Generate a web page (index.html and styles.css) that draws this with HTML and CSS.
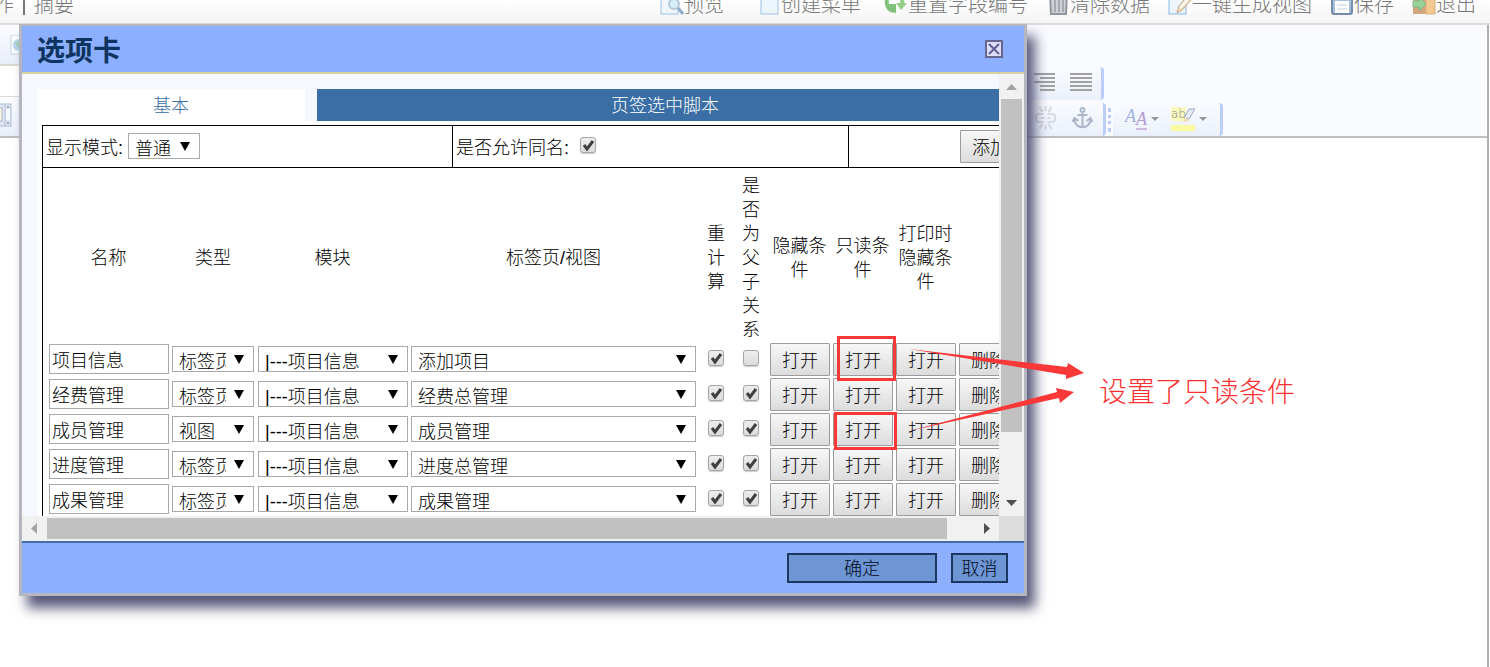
FILE: index.html
```html
<!DOCTYPE html>
<html lang="zh-CN">
<head>
    <meta charset="UTF-8">
    <meta name="viewport" content="width=device-width, initial-scale=1.0">
    <title>选项卡</title>
    <link rel="stylesheet" href="styles.css">
</head>
<body>
    <header class="topbar">
        <nav class="crumbs">
            <a href="#">操作</a>
            <span class="divider"></span>
            <a href="#">摘要</a>
        </nav>
        <div class="actions">
            <button class="action preview"><svg viewBox="0 0 24 24"><rect x="1" y="1" width="17" height="22" fill="#e8f3fd" stroke="#5f9ed8"/><circle cx="14" cy="13" r="5" fill="#bfe4f8" stroke="#8aa6c4" stroke-width="2"/><path d="M18 17l5 6" stroke="#4d78a8" stroke-width="3"/></svg>预览</button>
            <button class="action create"><svg viewBox="0 0 24 24"><rect x="4" y="1" width="17" height="22" fill="#e3f1fd" stroke="#5f9ed8"/></svg>创建菜单</button>
            <button class="action"><svg viewBox="0 0 24 24"><path d="M10 20c-6-1-8-6-7-12" fill="none" stroke="#2f9a26" stroke-width="4"/><path d="M4 13h8v10z" fill="#2f9a26"/><path d="M12 5c5 0 7 4 6 8" fill="none" stroke="#4fb33f" stroke-width="4"/><path d="M12 12h11l-6 7z" fill="#4fb33f"/></svg>重置字段编号</button>
            <button class="action"><svg viewBox="0 0 24 24"><path d="M4 2h17l-1 21H5z" fill="#b3bac4" stroke="#4c545f" stroke-width="2"/><path d="M9 4v17M13 4v17M17 4v17" stroke="#6b737e" stroke-width="2"/></svg>清除数据</button>
            <button class="action"><svg viewBox="0 0 24 24"><rect x="1" y="1" width="17" height="22" fill="#e3f1fd" stroke="#3f8de0"/><path d="M9 22l2-7L20 4l4 4-10 11z" fill="#f5c98c" stroke="#9a6b3c"/><path d="M20 8l-8 9" stroke="#fff" stroke-width="2"/><path d="M19 5l3-3 2 4-2 3z" fill="#e4432f"/></svg>一键生成视图</button>
            <button class="action"><svg viewBox="0 0 24 24"><rect x="2" y="1" width="20" height="22" rx="2" fill="#6e98c6" stroke="#1f4574" stroke-width="2"/><rect x="5" y="10" width="14" height="12" fill="#fff"/><path d="M7 14h10M7 18h10" stroke="#a8b8ca"/></svg>保存</button>
            <button class="action"><svg viewBox="0 0 24 24"><rect x="1" y="2" width="14" height="21" fill="#b8702f"/><path d="M14 3l9-2v22h-9z" fill="#f0a84a" stroke="#bd8138"/><path d="M1 10h6V6l7 7-7 7v-4H1z" fill="#55b75b" stroke="#2d8a3b"/></svg>退出</button>
        </div>
    </header>

    <main class="editor">
        <div class="editor-tools">
            <div class="tools-left">
                <div class="tools-strip"><svg class="side-icon" viewBox="0 0 20 20"><rect x="1" y="0" width="18" height="19" fill="#fff" stroke="#b9c4dc"/><circle cx="9" cy="10" r="6" fill="#9fc9ec"/><path d="M5 7l6 0 -2 7z" fill="#86c78c"/></svg></div>
                <div class="tools-blank"></div>
                <div class="tools-strip"><svg class="side-icon film" viewBox="0 0 20 24"><rect x="0" y="1" width="19" height="22" fill="#d7def0" stroke="#97a5c8"/><rect x="1" y="5" width="9" height="13" fill="#fff8dc" stroke="#9099b0"/><rect x="14" y="6" width="4" height="11" fill="#f5f8ff"/><path d="M13 1v22" stroke="#97a5c8"/><path d="M15 4h2M15 20h2M3 20h2" stroke="#75839f" stroke-width="2"/></svg></div>
            </div>
            <div class="tools-right">
                <div class="tool-row">
                    <div class="tool-group">
                        <svg class="tool" viewBox="0 0 22 20"><path d="M0 2h21M6 6h15M0 10h21M6 14h15M6 18h15" stroke="#999" stroke-width="2"/></svg>
                        <svg class="tool" viewBox="0 0 22 20"><path d="M0 2h22M0 6h22M0 10h22M0 14h22M0 18h22" stroke="#999" stroke-width="2"/></svg>
                    </div>
                </div>
                <div class="tool-row">
                    <div class="tool-group">
                        <svg class="tool tall" viewBox="0 0 22 24"><path d="M9 8H5c-5 0-5 8 0 8h4M13 8h4c5 0 5 8 0 8h-4M6 12h4M13 12h3M11 0v5M5 1l3 5M17 1l-3 5M11 19v5M5 23l3-5M17 23l-3-5" fill="none" stroke="#d2d6dd" stroke-width="2"/></svg>
                        <svg class="tool tall" viewBox="0 0 22 24"><path d="M11 7v14M6 9h10M3 13c0 11 16 11 16 0M1 16l2-4 4 3M21 16l-2-4-4 3" fill="none" stroke="#a5b0c3" stroke-width="2"/><circle cx="11" cy="4" r="2" fill="none" stroke="#a5b0c3" stroke-width="2"/></svg>
                    </div>
                    <span class="grip"></span>
                    <div class="tool-group wide">
                        <span class="letters"><b>A</b><b>A</b></span>
                        <span class="caret"></span>
                        <span class="marker"><span>ab</span><svg viewBox="0 0 12 16"><path d="M1 11L6 2h6L6 12z" fill="#e5ebf5" stroke="#9caac2"/><path d="M0 15l2-5 5 4z" fill="#f0dcae"/></svg></span>
                        <span class="caret"></span>
                    </div>
                </div>
            </div>
        </div>
        <div class="editor-page"></div>
    </main>

    <section class="dialog" role="dialog" aria-labelledby="dialog-title">
        <div class="dialog-head">
            <h1 id="dialog-title">选项卡</h1>
            <button class="close" aria-label="关闭"><svg viewBox="0 0 18 18"><rect x="1" y="1" width="16" height="16" fill="#dedcf6" stroke="#66668f" stroke-width="2"/><path d="M4 4l10 10M14 4L4 14" stroke="#5f5f96" stroke-width="2"/></svg></button>
        </div>
        <div class="dialog-body">
            <div class="viewport">
                <div class="content">
                    <div class="tabs">
                        <button class="tab active">基本</button>
                        <button class="tab script">页签选中脚本</button>
                    </div>
                    <div class="panel">
                        <div class="frame">
                            <div class="options">
                                <div class="option mode">
                                    <label for="mode">显示模式:</label>
                                    <select id="mode"><option>普通</option></select>
                                </div>
                                <div class="option same">
                                    <label for="same-name">是否允许同名:</label>
                                    <input type="checkbox" id="same-name" checked>
                                </div>
                                <div class="option add"><button class="btn">添加</button></div>
                            </div>
                            <table class="rows">
                                <colgroup>
                                    <col class="c-name"><col class="c-type"><col class="c-module"><col class="c-view"><col class="c-calc"><col class="c-parent"><col class="c-btn"><col class="c-btn"><col class="c-btn"><col class="c-btn">
                                </colgroup>
                                <thead>
                                    <tr>
                                        <th>名称</th>
                                        <th>类型</th>
                                        <th>模块</th>
                                        <th>标签页/视图</th>
                                        <th><span class="narrow">重计算</span></th>
                                        <th><span class="narrow">是否为父子关系</span></th>
                                        <th>隐藏条件</th>
                                        <th>只读条件</th>
                                        <th>打印时隐藏条件</th>
                                        <th></th>
                                    </tr>
                                </thead>
                                <tbody>
                                    <tr>
                                        <td><input type="text" aria-label="名称" value="项目信息"></td>
                                        <td><select aria-label="类型"><option>标签页</option></select></td>
                                        <td><select aria-label="模块"><option>|---项目信息</option></select></td>
                                        <td><select aria-label="标签页/视图"><option>添加项目</option></select></td>
                                        <td class="check"><input type="checkbox" aria-label="重计算" checked></td>
                                        <td class="check"><input type="checkbox" aria-label="是否为父子关系"></td>
                                        <td><button class="btn">打开</button></td>
                                        <td><button class="btn">打开</button></td>
                                        <td><button class="btn">打开</button></td>
                                        <td><button class="btn">删除</button></td>
                                    </tr>
                                    <tr>
                                        <td><input type="text" aria-label="名称" value="经费管理"></td>
                                        <td><select aria-label="类型"><option>标签页</option></select></td>
                                        <td><select aria-label="模块"><option>|---项目信息</option></select></td>
                                        <td><select aria-label="标签页/视图"><option>经费总管理</option></select></td>
                                        <td class="check"><input type="checkbox" aria-label="重计算" checked></td>
                                        <td class="check"><input type="checkbox" aria-label="是否为父子关系" checked></td>
                                        <td><button class="btn">打开</button></td>
                                        <td><button class="btn">打开</button></td>
                                        <td><button class="btn">打开</button></td>
                                        <td><button class="btn">删除</button></td>
                                    </tr>
                                    <tr>
                                        <td><input type="text" aria-label="名称" value="成员管理"></td>
                                        <td><select aria-label="类型"><option>视图</option></select></td>
                                        <td><select aria-label="模块"><option>|---项目信息</option></select></td>
                                        <td><select aria-label="标签页/视图"><option>成员管理</option></select></td>
                                        <td class="check"><input type="checkbox" aria-label="重计算" checked></td>
                                        <td class="check"><input type="checkbox" aria-label="是否为父子关系" checked></td>
                                        <td><button class="btn">打开</button></td>
                                        <td><button class="btn">打开</button></td>
                                        <td><button class="btn">打开</button></td>
                                        <td><button class="btn">删除</button></td>
                                    </tr>
                                    <tr>
                                        <td><input type="text" aria-label="名称" value="进度管理"></td>
                                        <td><select aria-label="类型"><option>标签页</option></select></td>
                                        <td><select aria-label="模块"><option>|---项目信息</option></select></td>
                                        <td><select aria-label="标签页/视图"><option>进度总管理</option></select></td>
                                        <td class="check"><input type="checkbox" aria-label="重计算" checked></td>
                                        <td class="check"><input type="checkbox" aria-label="是否为父子关系" checked></td>
                                        <td><button class="btn">打开</button></td>
                                        <td><button class="btn">打开</button></td>
                                        <td><button class="btn">打开</button></td>
                                        <td><button class="btn">删除</button></td>
                                    </tr>
                                    <tr>
                                        <td><input type="text" aria-label="名称" value="成果管理"></td>
                                        <td><select aria-label="类型"><option>标签页</option></select></td>
                                        <td><select aria-label="模块"><option>|---项目信息</option></select></td>
                                        <td><select aria-label="标签页/视图"><option>成果管理</option></select></td>
                                        <td class="check"><input type="checkbox" aria-label="重计算" checked></td>
                                        <td class="check"><input type="checkbox" aria-label="是否为父子关系" checked></td>
                                        <td><button class="btn">打开</button></td>
                                        <td><button class="btn">打开</button></td>
                                        <td><button class="btn">打开</button></td>
                                        <td><button class="btn">删除</button></td>
                                    </tr>
                                </tbody>
                            </table>
                        </div>
                    </div>
                </div>
            </div>
            <div class="scrollbar vertical">
                <svg class="arrow" viewBox="0 0 25 25"><path d="M7 16l5.500-6 5.500 6z" fill="#a3a3a3"/></svg>
                <span class="thumb"></span>
                <svg class="arrow end" viewBox="0 0 25 25"><path d="M7 9l5.500 6 5.500-6z" fill="#505050"/></svg>
            </div>
            <div class="scrollbar horizontal">
                <svg class="arrow" viewBox="0 0 25 25"><path d="M15 7l-6 5.500 6 5.500z" fill="#a3a3a3"/></svg>
                <span class="thumb"></span>
                <svg class="arrow end" viewBox="0 0 25 25"><path d="M10 7l6 5.500-6 5.500z" fill="#505050"/></svg>
            </div>
            <div class="corner"></div>
        </div>
        <div class="dialog-foot">
            <button class="ok">确定</button>
            <button class="cancel">取消</button>
        </div>
    </section>

    <!-- red notes over the dialog -->
    <svg class="notes" width="1100" height="460" viewBox="0 0 1100 460">
        <rect x="838.500" y="337.500" width="56" height="42"/>
        <rect x="835.500" y="413.500" width="60" height="35"/>
        <path class="pointer" d="M909 349L1067 367l1-4 16 10-18 6v-4zM909 431L1057 392l-1-4 18 4-14 11-1-5z"/>
    </svg>
    <p class="note-text">设置了只读条件</p>
</body>
</html>
```
FILE: styles.css
```css
* {
    box-sizing: border-box;
}
body {
    margin: 0;
    min-height: 100vh;
    display: flex;
    flex-direction: column;
    overflow: hidden;
    background-color: #fff;
    color: #000;
    font-family: "Liberation Sans", "Noto Sans CJK SC", sans-serif;
    font-size: 18px;
    font-weight: 300;
    line-height: 24px;
}
button, input, select {
    font: inherit;
    color: inherit;
    margin: 0;
    border-radius: 0;
}

/* top bar */
.topbar {
    height: 25px;
    flex: none;
    display: flex;
    justify-content: space-between;
    align-items: flex-end;
    padding: 0 14px 8px 0;
    overflow: hidden;
    background: linear-gradient(#fff, #f4f4f4);
    border-bottom: 2px solid #dcdcdc;
    font-size: 20px;
    line-height: 20px;
    color: #777;
}
.crumbs {
    display: flex;
    align-items: center;
    gap: 9px;
    margin-left: -26px;
}
.crumbs a {
    color: inherit;
    text-decoration: none;
}
.divider {
    width: 2px;
    height: 20px;
    background-color: #777;
}
.actions {
    display: flex;
    align-items: flex-end;
    gap: 18px;
}
.action {
    display: flex;
    align-items: flex-end;
    padding: 0;
    border: none;
    background: none;
    white-space: nowrap;
}
.action svg {
    width: 24px;
    height: 24px;
    opacity: 0.6;
}
.action.preview {
    margin-right: 15px;
}
.action.create {
    margin-right: 5px;
}

/* editor behind the dialog */
.editor {
    flex: 1;
    display: flex;
    flex-direction: column;
    margin-right: 1px;
    border-right: 2px solid #b0b0b0;
}
.editor-tools {
    display: flex;
    height: 113px;
    background-color: #fafbff;
    border-bottom: 2px solid #c0c0c4;
}
.tools-left {
    width: 1000px;
    flex: none;
    display: flex;
    flex-direction: column;
}
.tools-strip {
    flex: 1;
    background: linear-gradient(#fbfcff, #e9eefa);
}
.tools-blank {
    height: 33px;
    background-color: #fff;
    border-top: 2px solid #dcdad2;
    border-bottom: 1px solid #dcdad2;
}
.side-icon {
    width: 20px;
    height: 20px;
    margin: 10px 0 0 10px;
    opacity: 0.7;
}
.side-icon.film {
    height: 24px;
    margin: 6px 0 0 -8px;
}
.tools-right {
    flex: 1;
    display: flex;
    flex-direction: column;
    justify-content: flex-end;
    gap: 3px;
}
.tool-row {
    display: flex;
    align-items: center;
}
.tool-group {
    height: 33px;
    display: flex;
    align-items: center;
    gap: 14px;
    padding: 0 9px 4px 34px;
    background: linear-gradient(#fafbff, #eaf0fb);
    border-right: 3px solid #bccdfa;
    border-radius: 0 4px 4px 0;
}
.tool {
    width: 22px;
    height: 20px;
    opacity: 0.9;
}
.tool.tall {
    width: 23px;
    height: 24px;
}
.grip {
    height: 24px;
    margin: 0 2px;
    border-left: 3px dotted #b9c9f5;
}
.tool-group.wide {
    gap: 4px;
    padding: 0 13px 2px 12px;
}
.letters {
    display: flex;
    font-family: "Liberation Serif", serif;
    font-style: italic;
    font-size: 18px;
    line-height: 18px;
    color: #a0b2dc;
}
.letters b + b {
    padding-top: 3px;
    color: #b39cd2;
    border-bottom: 2px solid #cbb8df;
}
.caret {
    border: 4px solid transparent;
    border-top-color: #999;
    border-bottom: none;
    margin-right: 8px;
}
.tool-group.wide .caret:last-child {
    margin-right: 0;
}
.marker {
    display: flex;
    height: 24px;
    border-bottom: 6px solid #f9f9a0;
    font-family: "DejaVu Sans", sans-serif;
    font-size: 12px;
    line-height: 14px;
    color: #888;
}
.marker span {
    height: 14px;
    background-color: #fafac0;
}
.marker svg {
    width: 12px;
    height: 16px;
    margin-left: -3px;
}
.editor-page {
    flex: 1;
}

/* dialog */
.dialog {
    position: absolute;
    left: 19px;
    top: 24px;
    width: 1008px;
    border: 3px solid #b6b6c0;
    border-top-width: 2px;
    background-color: #8cb0ff;
    box-shadow: 8px 12px 12px #58587a;
}
.dialog-head {
    display: flex;
    justify-content: space-between;
    align-items: center;
    height: 48px;
    padding: 0 21px 0 15px;
    border-bottom: 2px solid #d5d2a0;
}
.dialog-head h1 {
    margin: 0;
    padding-top: 6px;
    font-size: 28px;
    line-height: 40px;
    color: #0f3460;
}
.close {
    display: flex;
    padding: 0;
    border: none;
    background: none;
}
.close svg {
    width: 18px;
    height: 18px;
}
.dialog-body {
    display: grid;
    grid-template-columns: minmax(0, 1fr) 25px;
    grid-template-rows: 442px 25px;
}
.viewport {
    overflow: hidden;
    background-color: #f6f8ff;
}
.content {
    width: 1006px;
    padding: 15px 15px 0;
}
.tabs {
    display: flex;
    gap: 12px;
}
.tab {
    height: 32px;
    padding: 2px 0 0;
    border: none;
}
.tab.active {
    width: 268px;
    background-color: #fff;
    color: #3a6ea5;
}
.tab.script {
    flex: 1;
    background-color: #3a6ea5;
    color: #fff;
}
.panel {
    padding: 4px 5px 0;
    background-color: #fff;
}
.frame {
    width: 980px;
    border: 1px solid #000;
    background-color: #fff;
}
.options {
    display: flex;
    height: 42px;
    border-bottom: 1px solid #000;
}
.option {
    display: flex;
    align-items: center;
    padding: 0 3px 1px;
    border-right: 1px solid #000;
}
.option.mode {
    width: 410px;
    gap: 5px;
}
.option.same {
    width: 396px;
    gap: 11px;
}
.option.add {
    flex: 1;
    justify-content: flex-end;
    padding: 0 1px;
    border-right: none;
}
.option label {
    padding-top: 4px;
}
.option select {
    width: 72px;
}
.option input {
    margin-bottom: 2px;
}
.rows {
    width: 973px;
    margin-left: 4px;
    table-layout: fixed;
    border-collapse: collapse;
}
.c-name { width: 123px; }
.c-type { width: 86px; }
.c-module { width: 153px; }
.c-view { width: 289px; }
.c-calc { width: 36px; }
.c-parent { width: 34px; }
.c-btn { width: 63px; }
.rows th {
    padding: 6px 2px 0;
    font-weight: inherit;
    text-align: center;
}
.narrow {
    display: block;
    width: 18px;
    margin: 0 auto;
}
.rows td {
    height: 35px;
    padding: 1px 1px 0 2px;
    vertical-align: top;
}
.rows td.check {
    padding: 8px 0 0;
}
input[type="text"] {
    display: block;
    width: 120px;
    height: 30px;
    margin-top: 1px;
    padding: 0 2px;
    border: 1px solid #a9a9a9;
    background-color: #fff;
}
select {
    appearance: none;
    display: block;
    width: 100%;
    height: 26px;
    padding: 4px 27px 0 6px;
    border: 1px solid #a9a9a9;
    line-height: 22px;
    background: #fff url("data:image/svg+xml,%3Csvg xmlns='http://www.w3.org/2000/svg' width='10' height='9'%3E%3Cpath d='M0 0h10L5 9z'/%3E%3C/svg%3E") no-repeat right 9px top 8px;
}
.rows select {
    margin-top: 3px;
}
td:nth-child(2) select {
    width: 82px;
}
td:nth-child(4) select {
    width: 285px;
}
input[type="checkbox"] {
    appearance: none;
    display: block;
    width: 16px;
    height: 16px;
    border: 1px solid #a5a5a5;
    border-radius: 3px;
    background: linear-gradient(#eee, #dcdcdc);
    box-shadow: 0 1px 1px #ccc;
}
.check input[type="checkbox"] {
    margin: 0 auto;
}
input[type="checkbox"]:checked {
    background: url("data:image/svg+xml,%3Csvg xmlns='http://www.w3.org/2000/svg' width='14' height='14'%3E%3Cpath d='M3 7l3 4 6-8' fill='none' stroke='%23404040' stroke-width='3'/%3E%3C/svg%3E") no-repeat center, linear-gradient(#eee, #dcdcdc);
}
.btn {
    display: block;
    width: 60px;
    height: 33px;
    padding: 2px 0 0;
    border: 1px solid #9c9c9c;
    border-radius: 1px;
    background: linear-gradient(#f7f7f7, #dcdcdc);
}

/* scrollbars */
.scrollbar {
    display: flex;
    background-color: #f1f1f1;
}
.scrollbar .arrow {
    flex: none;
    width: 25px;
    height: 25px;
}
.scrollbar .end {
    margin-left: auto;
}
.scrollbar .thumb {
    background-color: #c1c1c1;
}
.vertical {
    flex-direction: column;
}
.vertical .end {
    margin: auto 0 0;
}
.vertical .thumb {
    height: 333px;
    margin: 0 2px;
}
.horizontal .thumb {
    width: 900px;
    margin: 2px 0;
}
.corner {
    background-color: #dcdcdc;
}

.dialog-foot {
    display: flex;
    justify-content: flex-end;
    gap: 14px;
    padding: 10px 16px;
    border-top: 2px solid #416ea8;
}
.dialog-foot button {
    height: 30px;
    padding: 2px 0 0;
    border: 2px solid #1d3763;
    background-color: #6f96d4;
    color: #000820;
}
.dialog-foot .ok {
    width: 150px;
}
.dialog-foot .cancel {
    width: 57px;
}

/* notes */
.notes {
    position: absolute;
    left: 0;
    top: 0;
    pointer-events: none;
    fill: none;
    stroke: #fb3838;
    stroke-width: 3;
}
.notes .pointer {
    fill: #fb3838;
    stroke: none;
}
.note-text {
    position: absolute;
    left: 1099px;
    top: 373px;
    margin: 0;
    font-size: 28px;
    line-height: 40px;
    color: #fb3030;
}
```
